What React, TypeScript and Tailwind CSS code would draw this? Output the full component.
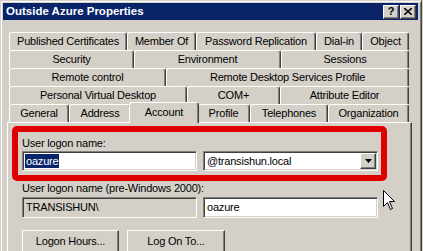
const font = "font-['Liberation_Sans',Arial,sans-serif] tracking-[-0.2px]";

const tabRows: [string, string][][] = [
  [
    ["Published Certificates", "w-[118px]"],
    ["Member Of", "w-[69px]"],
    ["Password Replication", "w-[120px]"],
    ["Dial-in", "w-[46px]"],
    ["Object", "w-[47px]"],
  ],
  [
    ["Security", "w-[125px]"],
    ["Environment", "w-[147px]"],
    ["Sessions", "w-[128px]"],
  ],
  [
    ["Remote control", "w-[157px]"],
    ["Remote Desktop Services Profile", "w-[243px]"],
  ],
  [
    ["Personal Virtual Desktop", "w-[178px]"],
    ["COM+", "w-[93px]"],
    ["Attribute Editor", "w-[129px]"],
  ],
];

const raised =
  "border border-t-white border-l-white border-r-[#404040] border-b-[#404040] shadow-[inset_-1px_-1px_0_#808080]";
const sunken =
  "border border-t-[#808080] border-l-[#808080] border-r-white border-b-white shadow-[inset_1px_1px_0_#404040,inset_-1px_-1px_0_#d4d0c8]";

function Tab({ label, w }: { label: string; w: string }) {
  return (
    <div
      className={`${w} h-[18px] shrink-0 flex items-center justify-center rounded-t-[3px] border-t border-l border-r border-t-white border-l-white border-r-[#404040] shadow-[inset_-1px_0_0_#808080] text-[11px] leading-none text-black`}
    >
      {label}
    </div>
  );
}

function Cursor() {
  return (
    <svg
      className="absolute left-[383px] top-[190px]"
      width="13"
      height="21"
      viewBox="0 0 13 21"
    >
      <path
        d="M0.5 0.5 L0.5 16.5 L4.5 12.5 L7.5 19.5 L9.5 18.5 L6.5 11.5 L11.5 11.5 Z"
        fill="#fff"
        stroke="#000"
        strokeWidth="1"
      />
    </svg>
  );
}

export default function App() {
  return (
    <div className={`relative w-[423px] h-[251px] overflow-hidden bg-[#d4d0c8] ${font}`}>
      <div className="w-[422px] h-[260px] border-t border-l border-r border-t-[#d4d0c8] border-l-[#d4d0c8] border-r-[#404040] shadow-[inset_1px_1px_0_#fff,inset_-1px_0_0_#808080] pt-[2px] px-[2px]">
        {/* title bar */}
        <div className="h-[17px] mr-[1px] bg-[#0a246a] flex items-center justify-between pl-[3px] pr-[2px]">
          <span className="text-white font-bold text-[11.5px] leading-none tracking-normal">
            Outside Azure Properties
          </span>
          <div className="flex">
            <div className={`w-[16px] h-[14px] bg-[#d4d0c8] ${raised} flex items-center justify-center text-[11px] font-bold leading-none text-black`}>
              ?
            </div>
            <div className={`ml-[1px] w-[16px] h-[14px] bg-[#d4d0c8] ${raised} flex items-center justify-center`}>
              <svg width="8" height="7" viewBox="0 0 8 7">
                <path d="M0 0 L8 7 M8 0 L0 7" stroke="#000" strokeWidth="1.6" />
              </svg>
            </div>
          </div>
        </div>

        {/* tabs */}
        <div className="ml-[4px] w-[405px] mt-[12px]">
          <div className="px-[2px] flex flex-col">
            {tabRows.map((row, i) => (
              <div key={i} className="flex h-[18px]">
                {row.map(([label, w]) => (
                  <Tab key={label} label={label} w={w} />
                ))}
              </div>
            ))}
            <div className="flex h-[18px] items-end">
              <Tab label="General" w="w-[60px]" />
              <Tab label="Address" w="w-[62px]" />
              <div className="relative z-10 -mx-[2px] -mb-[1px] w-[70px] h-[21px] shrink-0 flex items-center justify-center pb-[2px] rounded-t-[3px] bg-[#d4d0c8] border-t border-l border-r border-t-white border-l-white border-r-[#404040] shadow-[inset_-1px_0_0_#808080] text-[11px] leading-none text-black">
                Account
              </div>
              <Tab label="Profile" w="w-[53px]" />
              <Tab label="Telephones" w="w-[78px]" />
              <Tab label="Organization" w="w-[81px]" />
            </div>
          </div>

          {/* panel */}
          <div className="h-[140px] border-t border-l border-r border-t-white border-l-white border-r-[#404040] shadow-[inset_-1px_0_0_#808080] pt-[3px] pl-[4px]">
            <div className="w-[375px] h-[55px] rounded-[5px] border-[6px] border-[#e00000] pl-[4px] pt-[5px]">
              <div className="text-[11px] leading-[13px] text-black">User logon name:</div>
              <div className="mt-[1px] flex gap-[6px]">
                <div className={`w-[175px] h-[20px] bg-white ${sunken} flex items-center pl-[2px]`}>
                  <span className="bg-[#0a246a] text-white text-[11px] leading-[14px] px-[1px]">oazure</span>
                </div>
                <div className={`w-[175px] h-[20px] bg-white ${sunken} flex items-center justify-between pl-[3px] pr-[1px]`}>
                  <span className="text-[11px] leading-none text-black">@transishun.local</span>
                  <div className={`w-[16px] h-[16px] bg-[#d4d0c8] ${raised} flex items-center justify-center`}>
                    <svg width="7" height="4" viewBox="0 0 7 4">
                      <path d="M0 0 L7 0 L3.5 4 Z" fill="#000" />
                    </svg>
                  </div>
                </div>
              </div>
            </div>

            <div className="pl-[10px]">
              <div className="mt-[1px] text-[11px] leading-[13px] text-black">
                User logon name (pre-Windows 2000):
              </div>
              <div className="mt-[2px] flex gap-[6px]">
                <div className={`w-[175px] h-[21px] bg-[#d4d0c8] ${sunken} flex items-center pl-[3px] text-[11px] leading-none text-black`}>
                  TRANSISHUN\
                </div>
                <div className={`w-[175px] h-[21px] bg-white ${sunken} flex items-center pl-[3px] text-[11px] leading-none text-black`}>
                  oazure
                </div>
              </div>
              <div className="mt-[12px] flex gap-[8px]">
                <div className={`w-[97px] h-[23px] ${raised} flex items-center justify-center text-[11px] leading-none text-black`}>
                  Logon Hours...
                </div>
                <div className={`w-[98px] h-[23px] ${raised} flex items-center justify-center text-[11px] leading-none text-black`}>
                  Log On To...
                </div>
              </div>
            </div>
          </div>
        </div>
      </div>
      <Cursor />
    </div>
  );
}
